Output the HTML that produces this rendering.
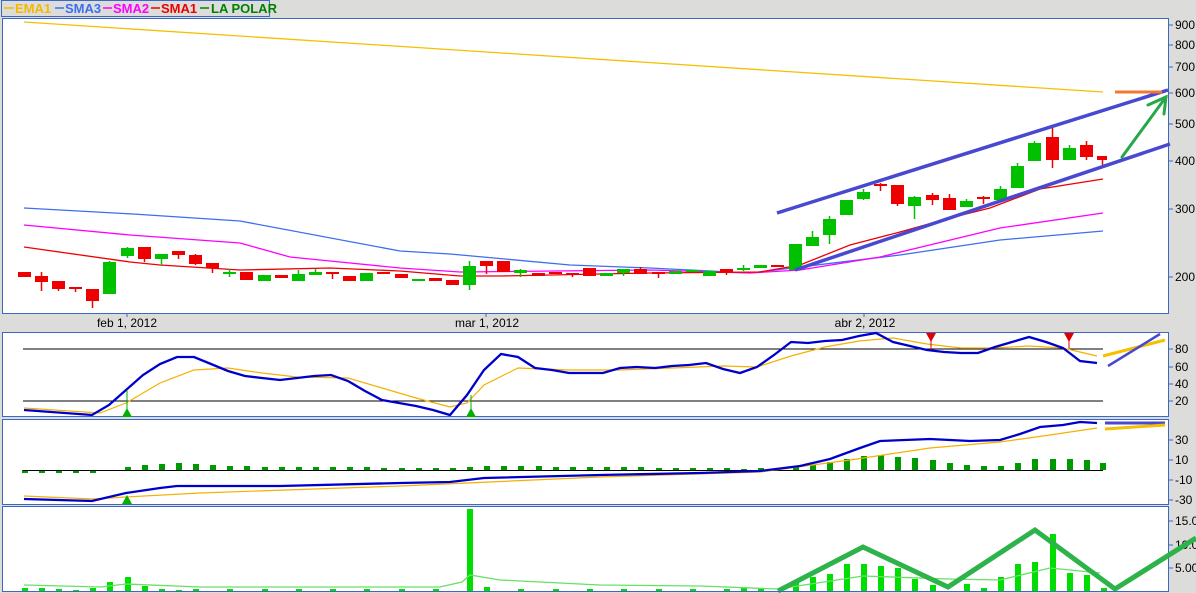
<!DOCTYPE html>
<html><head><meta charset="utf-8"><style>
html,body{margin:0;padding:0;background:#dcdddb;width:1196px;height:593px;overflow:hidden}
svg{display:block}
text{font-family:"Liberation Sans",sans-serif;font-size:12px;fill:#000}
.lg{font-weight:bold;font-size:13px}
</style></head><body>
<svg width="1196" height="593" viewBox="0 0 1196 593">
<!-- legend -->
<rect x="1.5" y="0.5" width="268" height="16" fill="#dcdddb" stroke="#3a68c4"/>
<line x1="4" y1="8" x2="14" y2="8" stroke="#f5b800" stroke-width="1.5"/><text x="15" y="13" class="lg" style="fill:#f5b800">EMA1</text>
<line x1="55" y1="8" x2="64" y2="8" stroke="#3d6ef0" stroke-width="1.5"/><text x="65" y="13" class="lg" style="fill:#3d6ef0">SMA3</text>
<line x1="103" y1="8" x2="112" y2="8" stroke="#ff00ff" stroke-width="1.5"/><text x="113" y="13" class="lg" style="fill:#ff00ff">SMA2</text>
<line x1="151" y1="8" x2="160" y2="8" stroke="#ee0000" stroke-width="1.5"/><text x="161" y="13" class="lg" style="fill:#ee0000">SMA1</text>
<line x1="200" y1="8" x2="209" y2="8" stroke="#008000" stroke-width="1.5"/><text x="211" y="13" class="lg" style="fill:#008000">LA POLAR</text>

<!-- panels -->
<rect x="2.5" y="18.5" width="1166" height="295" fill="#fff" stroke="#3a68c4"/>
<rect x="2.5" y="332.5" width="1166" height="84" fill="#fff" stroke="#3a68c4"/>
<rect x="2.5" y="419.5" width="1166" height="85" fill="#fff" stroke="#3a68c4"/>
<rect x="2.5" y="506.5" width="1166" height="85" fill="#fff" stroke="#3a68c4"/>

<!-- right axis labels main -->
<g stroke="#3a68c4"><line x1="1169" y1="25" x2="1173" y2="25"/><line x1="1169" y1="45" x2="1173" y2="45"/><line x1="1169" y1="67" x2="1173" y2="67"/><line x1="1169" y1="93" x2="1173" y2="93"/><line x1="1169" y1="124" x2="1173" y2="124"/><line x1="1169" y1="161" x2="1173" y2="161"/><line x1="1169" y1="209" x2="1173" y2="209"/><line x1="1169" y1="277" x2="1173" y2="277"/>
<line x1="1169" y1="349" x2="1173" y2="349"/><line x1="1169" y1="367" x2="1173" y2="367"/><line x1="1169" y1="384" x2="1173" y2="384"/><line x1="1169" y1="401" x2="1173" y2="401"/>
<line x1="1169" y1="440" x2="1173" y2="440"/><line x1="1169" y1="460" x2="1173" y2="460"/><line x1="1169" y1="480" x2="1173" y2="480"/><line x1="1169" y1="500" x2="1173" y2="500"/>
<line x1="1169" y1="521" x2="1173" y2="521"/><line x1="1169" y1="545" x2="1173" y2="545"/><line x1="1169" y1="568" x2="1173" y2="568"/>
<line x1="127" y1="313" x2="127" y2="317"/><line x1="486" y1="313" x2="486" y2="317"/><line x1="864" y1="313" x2="864" y2="317"/></g>
<g font-size="11">
<text x="1175" y="29">900</text><text x="1175" y="49">800</text><text x="1175" y="71">700</text><text x="1175" y="97">600</text><text x="1175" y="128">500</text><text x="1175" y="165">400</text><text x="1175" y="213">300</text><text x="1175" y="281">200</text>
<text x="1175" y="353">80</text><text x="1175" y="371">60</text><text x="1175" y="388">40</text><text x="1175" y="405">20</text>
<text x="1175" y="444">30</text><text x="1175" y="464">10</text><text x="1175" y="484">-10</text><text x="1175" y="504">-30</text>
<text x="1175" y="525">15.0</text><text x="1175" y="549">10.0</text><text x="1175" y="572">5.00</text>
<text x="127" y="327" text-anchor="middle">feb 1, 2012</text><text x="487" y="327" text-anchor="middle">mar 1, 2012</text><text x="865" y="327" text-anchor="middle">abr 2, 2012</text>
</g>

<!-- moving averages -->
<g fill="none" stroke-width="1.3">
<path d="M24,22 Q560,55 1103,92" stroke="#f5c000"/>
<path d="M24,208 L133,214 L240,221 L400,251 L450,254 L570,265 L650,268 L750,273 L900,255 L1000,240 L1103,231" stroke="#3d6ef0"/>
<path d="M24,225 L130,235 L240,243 L290,257 L330,261 L400,268 L460,272 L650,270 L750,273 L800,270 L880,257 L1000,228 L1103,213" stroke="#ff00ff"/>
<path d="M24,247 L130,262 L160,265 L240,270 L330,268 L400,271 L460,276 L500,276 L650,273 L760,272 L800,265 L850,245 L900,232 L950,218 L990,208 L1040,189 L1103,179" stroke="#ee0000"/>
</g>

<!-- candles -->
<g stroke-width="1.5">
<g fill="#ee0000" stroke="#ee0000">
<line x1="24.5" y1="272" x2="24.5" y2="277"/><rect x="18" y="272" width="13" height="5" stroke="none"/>
<line x1="41.5" y1="272" x2="41.5" y2="291"/><rect x="35" y="276" width="13" height="6" stroke="none"/>
<line x1="58.5" y1="281" x2="58.5" y2="291"/><rect x="52" y="281" width="13" height="8" stroke="none"/>
<line x1="75.5" y1="287" x2="75.5" y2="292"/><rect x="69" y="287" width="13" height="2" stroke="none"/>
<line x1="92.5" y1="289" x2="92.5" y2="308"/><rect x="86" y="289" width="13" height="12" stroke="none"/>
<line x1="144.5" y1="247" x2="144.5" y2="262"/><rect x="138" y="247" width="13" height="12" stroke="none"/>
<line x1="178.5" y1="251" x2="178.5" y2="259"/><rect x="172" y="251" width="13" height="4" stroke="none"/>
<line x1="195.5" y1="254" x2="195.5" y2="265"/><rect x="189" y="255" width="13" height="9" stroke="none"/>
<line x1="212.5" y1="263" x2="212.5" y2="273"/><rect x="206" y="263" width="13" height="5" stroke="none"/>
<rect x="240" y="272" width="13" height="8" stroke="none"/>
<rect x="275" y="275" width="13" height="3" stroke="none"/>
<line x1="332.5" y1="272" x2="332.5" y2="279"/><rect x="326" y="272" width="13" height="2" stroke="none"/>
<rect x="343" y="276" width="13" height="5" stroke="none"/>
<rect x="377" y="272" width="13" height="2" stroke="none"/>
<rect x="395" y="274" width="13" height="4" stroke="none"/>
<rect x="429" y="278" width="13" height="3" stroke="none"/>
<rect x="446" y="280" width="13" height="5" stroke="none"/>
<line x1="486.5" y1="261" x2="486.5" y2="274"/><rect x="480" y="261" width="13" height="5" stroke="none"/>
<rect x="497" y="261" width="13" height="11" stroke="none"/>
<rect x="532" y="273" width="13" height="3" stroke="none"/>
<rect x="549" y="272" width="13" height="2" stroke="none"/>
<line x1="572.5" y1="273" x2="572.5" y2="277"/><rect x="566" y="273" width="13" height="2" stroke="none"/>
<rect x="583" y="268" width="13" height="8" stroke="none"/>
<line x1="640.5" y1="267" x2="640.5" y2="274"/><rect x="634" y="269" width="13" height="5" stroke="none"/>
<line x1="658.5" y1="272" x2="658.5" y2="278"/><rect x="652" y="272" width="13" height="2" stroke="none"/>
<line x1="726.5" y1="269" x2="726.5" y2="275"/><rect x="720" y="269" width="13" height="3" stroke="none"/>
<rect x="771" y="265" width="13" height="2" stroke="none"/>
<line x1="880.5" y1="183" x2="880.5" y2="191"/><rect x="874" y="184" width="13" height="2" stroke="none"/>
<line x1="897.5" y1="185" x2="897.5" y2="206"/><rect x="891" y="185" width="13" height="19" stroke="none"/>
<line x1="932.5" y1="193" x2="932.5" y2="205"/><rect x="926" y="195" width="13" height="5" stroke="none"/>
<line x1="949.5" y1="194" x2="949.5" y2="210"/><rect x="943" y="198" width="13" height="12" stroke="none"/>
<line x1="983.5" y1="196" x2="983.5" y2="204"/><rect x="977" y="197" width="13" height="2" stroke="none"/>
<line x1="1052.5" y1="128" x2="1052.5" y2="168"/><rect x="1046" y="137" width="13" height="23" stroke="none"/>
<line x1="1086.5" y1="141" x2="1086.5" y2="160"/><rect x="1080" y="145" width="13" height="12" stroke="none"/>
<line x1="1102.5" y1="156" x2="1102.5" y2="165"/><rect x="1097" y="156" width="10" height="4" stroke="none"/>
</g>
<g fill="#00c000" stroke="#00c000">
<line x1="109.5" y1="261" x2="109.5" y2="294"/><rect x="103" y="262" width="13" height="32" stroke="none"/>
<line x1="127.5" y1="247" x2="127.5" y2="258"/><rect x="121" y="248" width="13" height="8" stroke="none"/>
<line x1="161.5" y1="254" x2="161.5" y2="265"/><rect x="155" y="254" width="13" height="5" stroke="none"/>
<line x1="229.5" y1="269" x2="229.5" y2="277"/><rect x="223" y="272" width="13" height="2" stroke="none"/>
<rect x="258" y="275" width="13" height="6" stroke="none"/>
<line x1="298.5" y1="270" x2="298.5" y2="281"/><rect x="292" y="274" width="13" height="7" stroke="none"/>
<line x1="315.5" y1="269" x2="315.5" y2="275"/><rect x="309" y="272" width="13" height="3" stroke="none"/>
<rect x="360" y="273" width="13" height="8" stroke="none"/>
<rect x="412" y="279" width="13" height="2" stroke="none"/>
<line x1="469.5" y1="261" x2="469.5" y2="290"/><rect x="463" y="266" width="13" height="19" stroke="none"/>
<line x1="520.5" y1="269" x2="520.5" y2="277"/><rect x="514" y="270" width="13" height="3" stroke="none"/>
<rect x="600" y="273" width="13" height="3" stroke="none"/>
<line x1="623.5" y1="269" x2="623.5" y2="276"/><rect x="617" y="269" width="13" height="4" stroke="none"/>
<rect x="669" y="271" width="13" height="3" stroke="none"/>
<rect x="686" y="270" width="13" height="2" stroke="none"/>
<rect x="703" y="271" width="13" height="5" stroke="none"/>
<line x1="743.5" y1="265" x2="743.5" y2="271"/><rect x="737" y="268" width="13" height="2" stroke="none"/>
<rect x="754" y="265" width="13" height="3" stroke="none"/>
<rect x="789" y="244" width="13" height="26" stroke="none"/>
<line x1="812.5" y1="231" x2="812.5" y2="246"/><rect x="806" y="237" width="13" height="9" stroke="none"/>
<line x1="829.5" y1="216" x2="829.5" y2="244"/><rect x="823" y="219" width="13" height="16" stroke="none"/>
<rect x="840" y="200" width="13" height="15" stroke="none"/>
<line x1="863.5" y1="189" x2="863.5" y2="200"/><rect x="857" y="192" width="13" height="7" stroke="none"/>
<line x1="914.5" y1="196" x2="914.5" y2="219"/><rect x="908" y="197" width="13" height="9" stroke="none"/>
<line x1="966.5" y1="199" x2="966.5" y2="207"/><rect x="960" y="201" width="13" height="6" stroke="none"/>
<line x1="1000.5" y1="186" x2="1000.5" y2="200"/><rect x="994" y="189" width="13" height="11" stroke="none"/>
<line x1="1017.5" y1="163" x2="1017.5" y2="188"/><rect x="1011" y="166" width="13" height="22" stroke="none"/>
<line x1="1034.5" y1="141" x2="1034.5" y2="161"/><rect x="1028" y="143" width="13" height="18" stroke="none"/>
<line x1="1069.5" y1="145" x2="1069.5" y2="160"/><rect x="1063" y="148" width="13" height="12" stroke="none"/>
</g>
</g>

<!-- channel & arrows -->
<line x1="777" y1="213" x2="1168" y2="90" stroke="#4848d0" stroke-width="3.5"/>
<line x1="795" y1="270" x2="1170" y2="144" stroke="#4848d0" stroke-width="3.5"/>
<line x1="1115" y1="92" x2="1162" y2="92" stroke="#f07830" stroke-width="3"/>
<g stroke="#25a848" stroke-width="3" fill="none" stroke-linecap="round"><line x1="1122" y1="157" x2="1166" y2="97"/><polyline points="1148,105 1166,97 1164,114"/></g>

<!-- panel 2 -->
<line x1="23" y1="349" x2="1103" y2="349" stroke="#000"/>
<line x1="23" y1="401" x2="1103" y2="401" stroke="#000"/>
<polyline fill="none" stroke="#f5b000" stroke-width="1.2" points="24,408 100,413 126,403 160,383 194,370 228,368 262,373 297,377 348,378 382,388 416,398 450,407 467,403 484,385 518,368 569,370 620,370 672,368 723,366 757,367 791,356 825,347 859,341 893,338 927,344 961,348 995,348 1029,346 1063,348 1080,352 1097,356"/>
<polyline fill="none" stroke="#0000cc" stroke-width="2.3" points="24,410 92,415 109,405 126,390 143,375 160,364 177,357 194,357 211,364 228,371 245,376 262,378 280,380 297,378 314,376 331,375 348,381 365,391 382,400 399,403 416,406 433,410 450,415 467,395 484,370 501,354 518,357 535,368 552,370 569,373 586,373 603,373 620,368 637,367 655,368 672,366 689,365 706,363 723,369 740,373 757,367 774,355 791,342 808,343 825,341 842,340 859,336 876,333 893,342 910,346 927,350 944,352 961,353 978,353 995,347 1012,342 1029,337 1046,342 1063,348 1080,361 1097,363"/>
<line x1="127" y1="390" x2="127" y2="412" stroke="#00b000"/><polygon points="122,417 127,408 132,417" fill="#00b000"/>
<line x1="471" y1="395" x2="471" y2="412" stroke="#00b000"/><polygon points="466,417 471,408 476,417" fill="#00b000"/>
<line x1="931" y1="333" x2="931" y2="350" stroke="#e00000"/><polygon points="926,333 936,333 931,342" fill="#e00000"/>
<line x1="1069" y1="333" x2="1069" y2="348" stroke="#e00000"/><polygon points="1064,333 1074,333 1069,342" fill="#e00000"/>
<line x1="1103" y1="356" x2="1165" y2="340" stroke="#f5c000" stroke-width="3"/>
<line x1="1108" y1="366" x2="1160" y2="334" stroke="#4848d0" stroke-width="2.5"/>

<!-- panel 3 -->
<g fill="#009900">
<rect x="22" y="470" width="6" height="3"/><rect x="39" y="470" width="6" height="3"/><rect x="56" y="470" width="6" height="3"/><rect x="73" y="470" width="6" height="3"/><rect x="90" y="470" width="6" height="3"/>
<rect x="125" y="467" width="6" height="3"/><rect x="142" y="465" width="6" height="5"/><rect x="159" y="464" width="6" height="6"/><rect x="176" y="463" width="6" height="7"/><rect x="193" y="464" width="6" height="6"/><rect x="210" y="465" width="6" height="5"/>
<rect x="227" y="466" width="6" height="4"/><rect x="244" y="466" width="6" height="4"/><rect x="262" y="467" width="6" height="3"/><rect x="279" y="467" width="6" height="3"/><rect x="296" y="467" width="6" height="3"/><rect x="313" y="467" width="6" height="3"/><rect x="330" y="467" width="6" height="3"/><rect x="347" y="467" width="6" height="3"/><rect x="364" y="467" width="6" height="3"/><rect x="381" y="468" width="6" height="2"/><rect x="399" y="468" width="6" height="2"/><rect x="416" y="468" width="6" height="2"/><rect x="433" y="468" width="6" height="2"/><rect x="450" y="468" width="6" height="2"/>
<rect x="467" y="467" width="6" height="3"/><rect x="484" y="466" width="6" height="4"/><rect x="501" y="466" width="6" height="4"/><rect x="518" y="466" width="6" height="4"/><rect x="536" y="466" width="6" height="4"/><rect x="553" y="467" width="6" height="3"/><rect x="570" y="467" width="6" height="3"/><rect x="587" y="467" width="6" height="3"/><rect x="604" y="467" width="6" height="3"/><rect x="621" y="467" width="6" height="3"/><rect x="638" y="467" width="6" height="3"/><rect x="656" y="468" width="6" height="2"/><rect x="673" y="468" width="6" height="2"/><rect x="690" y="468" width="6" height="2"/><rect x="707" y="468" width="6" height="2"/><rect x="724" y="468" width="6" height="2"/>
<rect x="741" y="469" width="6" height="1"/><rect x="758" y="468" width="6" height="2"/><rect x="775" y="468" width="6" height="2"/><rect x="793" y="467" width="6" height="3"/><rect x="810" y="465" width="6" height="5"/><rect x="827" y="462" width="6" height="8"/><rect x="844" y="459" width="6" height="11"/><rect x="861" y="456" width="6" height="14"/><rect x="878" y="455" width="6" height="15"/><rect x="895" y="457" width="6" height="13"/><rect x="912" y="458" width="6" height="12"/><rect x="930" y="460" width="6" height="10"/><rect x="947" y="463" width="6" height="7"/><rect x="964" y="465" width="6" height="5"/><rect x="981" y="466" width="6" height="4"/><rect x="998" y="466" width="6" height="4"/><rect x="1015" y="463" width="6" height="7"/><rect x="1032" y="459" width="6" height="11"/><rect x="1050" y="459" width="6" height="11"/><rect x="1067" y="459" width="6" height="11"/><rect x="1084" y="460" width="6" height="10"/><rect x="1100" y="463" width="6" height="7"/>
</g>
<line x1="23" y1="470.5" x2="1103" y2="470.5" stroke="#000"/>
<polyline fill="none" stroke="#f5b000" stroke-width="1.2" points="24,496 92,499 126,497 200,493 400,486 600,477 760,472 850,460 930,448 1000,442 1050,435 1097,428"/>
<polyline fill="none" stroke="#0000cc" stroke-width="2.3" points="24,499 92,501 126,493 160,488 177,486 280,486 400,483 450,482 484,478 600,475 700,473 760,471 800,466 830,459 860,448 880,441 930,439 970,441 1000,440 1020,434 1040,427 1063,425 1080,422 1097,423"/>
<polygon points="122,504 127,495 132,504" fill="#00b000"/>
<line x1="1105" y1="423" x2="1165" y2="423" stroke="#4848d0" stroke-width="3"/>
<line x1="1105" y1="429" x2="1165" y2="425" stroke="#f5c000" stroke-width="3"/>

<!-- panel 4 -->
<g fill="#00dd00">
<rect x="22" y="588" width="6" height="3"/><rect x="39" y="588" width="6" height="3"/><rect x="56" y="589" width="6" height="2"/><rect x="73" y="590" width="6" height="1"/><rect x="90" y="588" width="6" height="3"/><rect x="107" y="582" width="6" height="9"/><rect x="125" y="577" width="6" height="14"/><rect x="142" y="586" width="6" height="5"/><rect x="159" y="589" width="6" height="2"/><rect x="176" y="590" width="6" height="1"/>
<rect x="193" y="589" width="6" height="2"/><rect x="227" y="589" width="6" height="2"/><rect x="262" y="589" width="6" height="2"/><rect x="296" y="589" width="6" height="2"/><rect x="330" y="589" width="6" height="2"/><rect x="364" y="589" width="6" height="2"/><rect x="399" y="589" width="6" height="2"/><rect x="433" y="589" width="6" height="2"/>
<rect x="467" y="509" width="6" height="82"/><rect x="484" y="587" width="6" height="4"/><rect x="518" y="589" width="6" height="2"/><rect x="553" y="589" width="6" height="2"/><rect x="587" y="589" width="6" height="2"/><rect x="621" y="589" width="6" height="2"/><rect x="656" y="589" width="6" height="2"/><rect x="690" y="589" width="6" height="2"/><rect x="724" y="589" width="6" height="2"/>
<rect x="741" y="588" width="6" height="3"/><rect x="758" y="588" width="6" height="3"/><rect x="793" y="583" width="6" height="8"/><rect x="810" y="577" width="6" height="14"/><rect x="827" y="574" width="6" height="17"/><rect x="844" y="564" width="6" height="27"/><rect x="861" y="564" width="6" height="27"/><rect x="878" y="566" width="6" height="25"/><rect x="895" y="568" width="6" height="23"/><rect x="912" y="579" width="6" height="12"/><rect x="930" y="585" width="6" height="6"/><rect x="964" y="584" width="6" height="7"/><rect x="981" y="588" width="6" height="3"/><rect x="998" y="577" width="6" height="14"/><rect x="1015" y="564" width="6" height="27"/><rect x="1032" y="562" width="6" height="29"/><rect x="1050" y="534" width="6" height="57"/><rect x="1067" y="573" width="6" height="18"/><rect x="1084" y="575" width="6" height="16"/><rect x="1101" y="588" width="6" height="3"/>
</g>
<polyline fill="none" stroke="#66e066" stroke-width="1.3" points="24,585 100,587 126,584 200,587 440,587 462,582 470,575 500,580 600,585 700,586 778,589 863,576 948,579 1000,580 1050,568 1100,573"/>
<polyline fill="none" stroke="#2db34a" stroke-width="5" stroke-linejoin="miter" points="778,591 863,547 948,587 1035,530 1115,589 1196,538"/>
<line x1="3" y1="591.5" x2="1168" y2="591.5" stroke="#3a68c4"/>
</svg>
</body></html>
